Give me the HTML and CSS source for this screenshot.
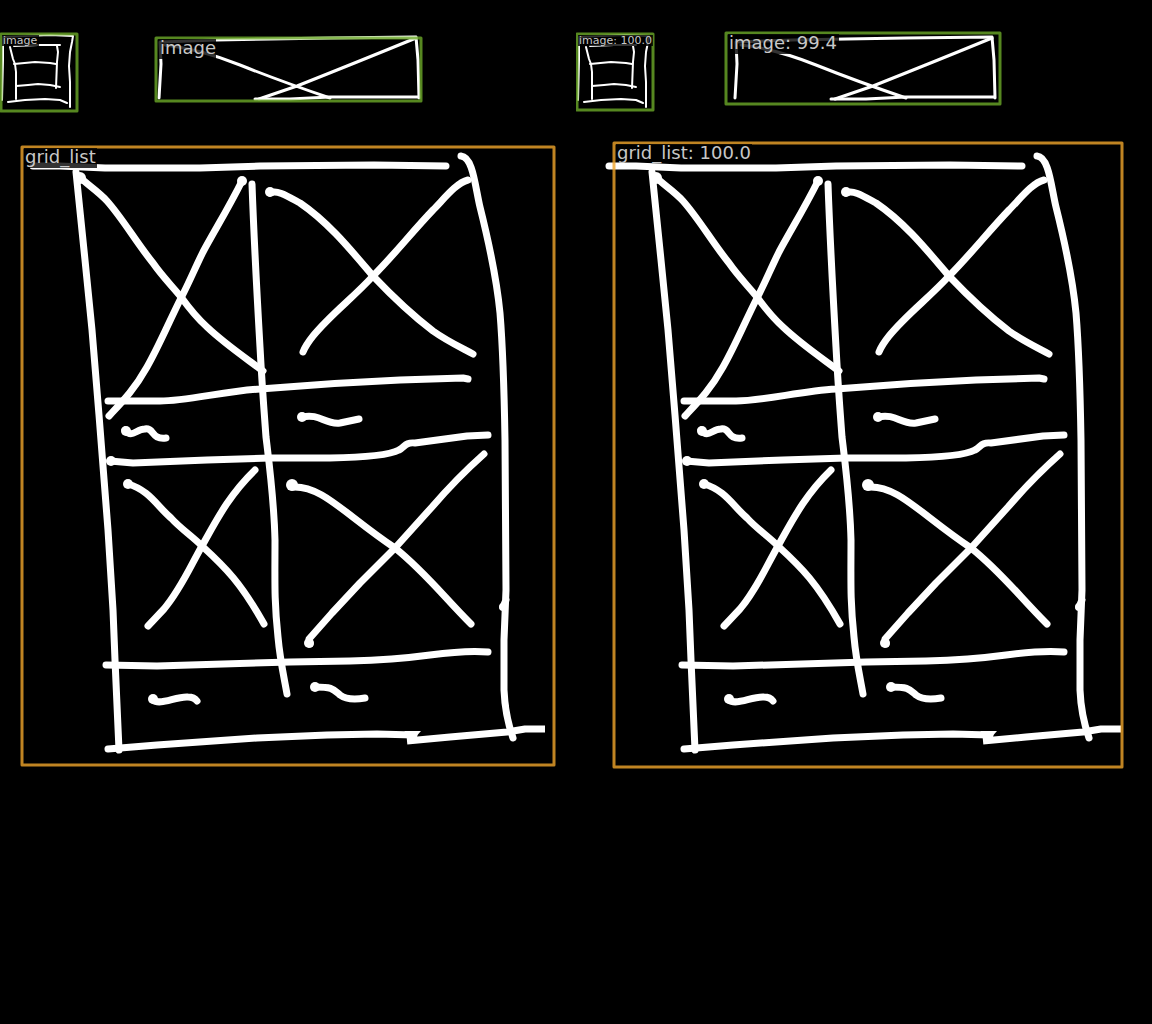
FILE: index.html
```html
<!DOCTYPE html>
<html lang="en">
<head>
<meta charset="utf-8">
<meta name="viewport" content="width=device-width, initial-scale=1">
<title>Detected elements</title>
<link rel="stylesheet" href="styles.css">
</head>
<body>
<main class="comparison">
  <svg class="panel" viewBox="0 0 576 1024" role="img" aria-label="Sketch with labelled elements">
    <defs>
      <g id="sketch">
        <g class="ink ink-thin">
          <path d="M3 37 3 60 2 100M4 37 25 36 50 35 73 36 72 42 70 52 69 66 70 82 70 107"/>
          <path d="M10 47 13 59 15 64 16 72 16 99M14 46 38 45 60 45M57 46 58 52 57 62 56 88"/>
          <path d="M14 64 35 62 50 63 56 64M16 86 28 85 38 84 50 85 60 87M8 102 25 100 45 99 60 100 67 103"/>
        </g>
        <g class="ink ink-medium">
          <path d="M160 42 161 64 159 98M161 42 216 40 270 39 330 38 416 37 418 60 419 98"/>
          <path d="M165 45Q200 49 240 65T330 98M416 38Q360 61 297 86L259 99"/>
          <path d="M255 99 290 99 330 97 418 97"/>
        </g>
        <g class="ink ink-bold">
          <path d="M33 166 60 166 105 168 200 168 260 166 374 165 446 166"/>
          <path d="M76 172 85 260 92 330 99 415 108 530 113 610 115 660 119 750"/>
          <path d="M80 177C85 183 98 191 107 201C123 219 136 242 153 263C162 276 172 286 181 297C189 308 197 318 207 327C225 344 243 356 263 371"/>
          <path d="M242 181C228 209 216 228 203 252C195 268 189 283 181 298C168 324 159 346 147 367C134 390 123 401 109 416"/>
          <path d="M252 184C254 240 257 295 260 347C262 385 264 410 266 437C270 470 274 500 275 540C275 580 274 600 278 637C280 660 284 677 287 694"/>
          <path d="M270 193C277 189 289 197 300 203C328 222 350 249 373 276C392 296 412 315 433 331C447 341 460 347 473 354"/>
          <path d="M468 180C456 183 444 199 433 210C412 232 394 255 373 276C354 297 330 315 313 336C309 341 305 347 303 352"/>
          <path d="M461 156C473 157 475 186 480 207C487 235 496 272 500 313C503 350 504 380 505 440L506 590 504 640 504 690Q505 715 513 738M503 607 506 600"/>
          <path d="M108 401H160C187 401 225 391 260 389Q330 383 400 380L463 378 468 379"/>
          <path d="M125 430C132 439 136 429 145 429C154 427 151 440 166 438"/>
          <path d="M302 417C320 413 325 425 340 423L359 419"/>
          <path d="M110 461 133 463 207 460 270 458 330 458Q386 457 399 450C405 447 405 442 415 443L467 436 488 435"/>
          <path d="M128 484C149 490 157 506 171 518C181 529 192 536 202 546C226 568 241 583 264 624"/>
          <path d="M255 470C229 495 216 521 202 546C191 565 181 589 164 609L148 626"/>
          <path d="M292 487C322 485 344 514 395 548C424 571 444 597 471 624"/>
          <path d="M484 454Q457 478 432 507L395 548 360 583 332 613 309 639 310 644"/>
          <path d="M106 665 157 666 290 662 350 661Q393 660 430 655T488 652"/>
          <path d="M153 700C160 706 176 696 188 697Q194 697 197 701"/>
          <path d="M315 687C333 687 333 689 340 695Q348 701 365 698"/>
          <path d="M108 749 157 745 257 738 327 735 377 734 414 735"/>
          <path class="flat" d="M407 741 450 737 507 732 525 729 545 729"/>
        </g>
        <g class="dots">
          <circle cx="80" cy="178" r="6"/>
          <circle cx="242" cy="181" r="5"/>
          <circle cx="292" cy="485" r="6"/>
          <circle cx="128" cy="484" r="5"/>
          <circle cx="302" cy="417" r="5"/>
          <circle cx="270" cy="192" r="5"/>
          <circle cx="309" cy="643" r="5"/>
          <circle cx="315" cy="687" r="5"/>
          <circle cx="153" cy="699" r="5"/>
          <circle cx="126" cy="431" r="5"/>
          <circle cx="111" cy="461" r="5"/>
          <circle cx="503" cy="607" r="4"/>
          <path d="M404 731H421L414 739Z"/>
        </g>
      </g>
    </defs>
    <use href="#sketch"/>
    <rect class="box box-image" x="1" y="34" width="76" height="77"/>
    <rect class="box box-image" x="156" y="38" width="265" height="63"/>
    <rect class="box box-grid" x="22" y="147" width="532" height="618"/>
    <rect class="shade" x="2" y="35" width="37" height="11"/>
    <rect class="shade" x="158" y="39" width="58" height="20"/>
    <rect class="shade" x="24" y="148" width="73" height="20"/>
    <text class="label label-small" x="3" y="44">image</text>
    <text class="label" x="160" y="54">image</text>
    <text class="label" x="25" y="163">grid_list</text>
  </svg>
  <svg class="panel" viewBox="0 0 576 1024" role="img" aria-label="Sketch with labelled elements and scores">
    <use href="#sketch"/>
    <rect class="box box-image" x="1" y="34" width="76" height="76"/>
    <rect class="box box-image" x="150" y="33" width="274" height="71"/>
    <rect class="box box-grid" x="38" y="143" width="508" height="624"/>
    <rect class="shade" x="2" y="35" width="75" height="11"/>
    <rect class="shade" x="152" y="34" width="111" height="20"/>
    <rect class="shade" x="40" y="144" width="136" height="18"/>
    <text class="label label-small" x="3" y="44">image: 100.0</text>
    <text class="label" x="153" y="49">image: 99.4</text>
    <text class="label" x="41" y="159">grid_list: 100.0</text>
  </svg>
</main>
</body>
</html>
```
FILE: styles.css
```css
body {
  margin: 0;
  background: #000;
}

.comparison {
  display: grid;
  grid-template-columns: 1fr 1fr;
}

.panel {
  display: block;
  width: 100%;
  height: auto;
  overflow: hidden;
}

.ink {
  fill: none;
  stroke: #fff;
  stroke-linecap: round;
  stroke-linejoin: round;
}

.ink-thin {
  stroke-width: 2px;
}

.ink-medium {
  stroke-width: 3px;
}

.ink-bold {
  stroke-width: 7px;
}

.flat {
  stroke-linecap: butt;
}

.dots {
  fill: #fff;
}

.box {
  fill: none;
  stroke-width: 3px;
  stroke-linejoin: round;
}

.box-image {
  stroke: rgba(108, 169, 40, 0.8);
}

.box-grid {
  stroke: rgba(240, 165, 43, 0.8);
}

.shade {
  fill: rgba(0, 0, 0, 0.8);
}

.label {
  fill: #c8c8c8;
  font-family: "DejaVu Sans", sans-serif;
  font-size: 18px;
}

.label-small {
  font-size: 11px;
}
```
